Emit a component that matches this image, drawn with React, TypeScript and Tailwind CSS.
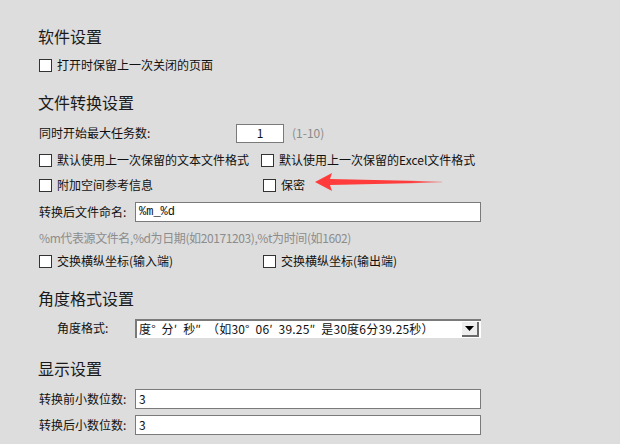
const font = { fontFamily: '"Noto Sans CJK SC", "Liberation Sans", sans-serif' };

function Check({ label, className = '' }: { label: string; className?: string }) {
  return (
    <label className={`flex items-center gap-[5px] ${className}`}>
      <span className="inline-block h-[13px] w-[13px] shrink-0 border border-[#333] bg-white" />
      <span>{label}</span>
    </label>
  );
}

function Heading({ children, className = '' }: { children: string; className?: string }) {
  return <div className={`flex h-5 items-center text-[16px] text-[#1a1a1a] ${className}`}>{children}</div>;
}

function TextBox({ value, className = '' }: { value: string; className?: string }) {
  return (
    <div className={`flex h-5 items-center border border-[#7a7a7a] bg-white pl-[3px] ${className}`}>
      {value}
    </div>
  );
}

export default function App() {
  return (
    <div
      className="relative h-[444px] w-[620px] overflow-hidden bg-[#dddddd] pl-[38px] pt-[26px] text-[12px] text-[#111]"
      style={font}
    >
      <Heading>软件设置</Heading>
      <div className="mt-[9px] flex h-5 items-center pl-px">
        <Check label="打开时保留上一次关闭的页面" />
      </div>

      <Heading className="mt-[17px]">文件转换设置</Heading>
      <div className="mt-[11px] flex h-5 items-center pl-px">
        <span className="w-[197px]">同时开始最大任务数:</span>
        <div className="flex h-[19px] w-[48px] items-center justify-center border border-[#7a7a7a] bg-white">
          1
        </div>
        <span className="ml-2 text-[#8a8a8a]">(1-10)</span>
      </div>
      <div className="mt-[7px] flex h-5 items-center pl-px">
        <Check label="默认使用上一次保留的文本文件格式" className="w-[222px]" />
        <Check label="默认使用上一次保留的Excel文件格式" />
      </div>
      <div className="mt-[5px] flex h-5 items-center pl-px">
        <Check label="附加空间参考信息" className="w-[224px]" />
        <Check label="保密" />
      </div>
      <div className="mt-[7px] flex h-5 items-center pl-px">
        <span className="w-[96px]">转换后文件命名:</span>
        <div className="flex h-5 w-[346px] items-center border border-[#7a7a7a] bg-white pl-[3px] font-mono text-[12px]">
          %m_%d
        </div>
      </div>
      <div className="mt-[6px] flex h-5 items-center pl-px tracking-[-0.4px] text-[#8c8c8c]">
        %m代表源文件名,%d为日期(如20171203),%t为时间(如1602)
      </div>
      <div className="mt-[3px] flex h-5 items-center pl-px">
        <Check label="交换横纵坐标(输入端)" className="w-[224px]" />
        <Check label="交换横纵坐标(输出端)" />
      </div>

      <Heading className="mt-[17px]">角度格式设置</Heading>
      <div className="mt-[10px] flex h-5 items-center pl-[19px]">
        <span className="w-[78px]">角度格式:</span>
        <div className="flex h-[19px] w-[346px] items-center justify-between border-l-2 border-t-2 border-l-[#7a7a7a] border-t-[#7a7a7a] bg-white pl-[2px]">
          <span className="whitespace-pre tracking-[0.2px]">度°  分′  秒″  （如30°  06′  39.25″  是30度6分39.25秒）</span>
          <span className="mr-[2px] flex h-[15px] w-[17px] items-center justify-center border-b-2 border-r-2 border-b-[#6a6a6a] border-r-[#6a6a6a] bg-[#eeeeee]">
            <svg width="9" height="5" viewBox="0 0 9 5">
              <polygon points="0,0 9,0 4.5,5" fill="#000" />
            </svg>
          </span>
        </div>
      </div>

      <Heading className="mt-[20px]">显示设置</Heading>
      <div className="mt-[11px] flex h-5 items-center pl-px">
        <span className="w-[96px]">转换前小数位数:</span>
        <TextBox value="3" className="w-[346px]" />
      </div>
      <div className="mt-[6px] flex h-5 items-center pl-px">
        <span className="w-[96px]">转换后小数位数:</span>
        <TextBox value="3" className="w-[346px]" />
      </div>

      <svg className="absolute left-[314px] top-[172px]" width="130" height="20" viewBox="0 0 130 20">
        <defs>
          <linearGradient id="fade" x1="0" x2="1" y1="0" y2="0">
            <stop offset="0.75" stopColor="#ff3b3b" />
            <stop offset="1" stopColor="#ff3b3b" stopOpacity="0.3" />
          </linearGradient>
        </defs>
        <polygon points="1,10 18,1 16,7 128,9.5 128,10.5 16,13 18,19" fill="url(#fade)" />
      </svg>
    </div>
  );
}
